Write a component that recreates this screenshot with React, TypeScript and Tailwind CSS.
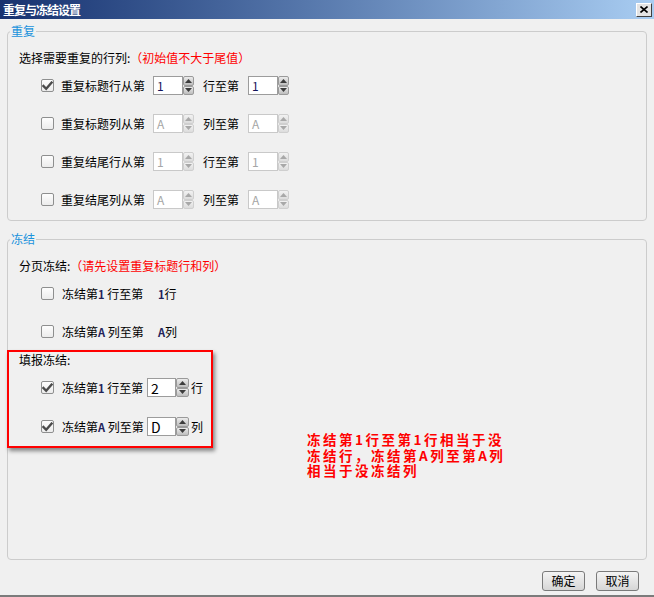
import React from "react";

const font = { fontFamily: '"Noto Sans CJK SC", "Liberation Sans", sans-serif' };

function Check({ checked }: { checked?: boolean }) {
  return (
    <span className="flex h-[13px] w-[13px] shrink-0 items-center justify-center rounded-[2px] border border-[#8e8f8f] bg-gradient-to-b from-[#fdfdfd] to-[#ececec]">
      {checked && (
        <svg width="11" height="10" viewBox="0 0 11 10">
          <path d="M1.5 5 L4.2 7.8 L9.6 1.6" fill="none" stroke="#4b4b4b" strokeWidth="2.4" strokeLinecap="square" />
        </svg>
      )}
    </span>
  );
}

function Arrow({ up, off }: { up?: boolean; off?: boolean }) {
  return (
    <span
      className={
        off
          ? "flex flex-1 items-center justify-center rounded-[2px] border border-[#cfcfcf] bg-gradient-to-b from-[#f2f2f2] to-[#dcdcdc]"
          : "flex flex-1 items-center justify-center rounded-[2px] border border-[#9a9a9a] bg-gradient-to-b from-[#ececec] to-[#bdbdbd]"
      }
    >
      <svg width="7" height="4" viewBox="0 0 7 4">
        <path d={up ? "M0 4 L3.5 0 L7 4 Z" : "M0 0 L3.5 4 L7 0 Z"} fill={off ? "#a8a8a8" : "#3c3c3c"} />
      </svg>
    </span>
  );
}

function Spin({ value, off, big }: { value: string; off?: boolean; big?: boolean }) {
  return (
    <div className="flex h-[19px] shrink-0">
      <div
        className={
          off
            ? "flex w-[30px] items-center border border-[#c9c9c9] bg-white pl-[3px] text-[12px] text-[#a6a6a6]"
            : big
            ? "flex w-[29px] items-center border border-[#9c9c9c] bg-white pl-[3px] text-[14px] text-black"
            : "flex w-[30px] items-center border border-[#9c9c9c] bg-white pl-[3px] text-[12px] text-[#14145a]"
        }
      >
        {value}
      </div>
      <div className={big ? "flex w-[13px] flex-col" : "flex w-[11px] flex-col"}>
        <Arrow up off={off} />
        <Arrow off={off} />
      </div>
    </div>
  );
}

function RepeatRow({ checked, label, mid, val }: { checked?: boolean; label: string; mid: string; val: string }) {
  const off = !checked;
  return (
    <div className="flex h-[19px] items-center pl-[33px]">
      <Check checked={checked} />
      <span className="ml-[7px] w-[84px] whitespace-nowrap">{label}</span>
      <span className="ml-[8px]">
        <Spin value={val} off={off} />
      </span>
      <span className="ml-[9px] w-[36px] whitespace-nowrap">{mid}</span>
      <span className="ml-[9px]">
        <Spin value={val} off={off} />
      </span>
    </div>
  );
}

export default function App() {
  return (
    <div
      style={font}
      className="relative flex h-[597px] w-[654px] flex-col overflow-hidden border-b-2 border-[#7b7b7b] bg-[#f0f0f0] text-[12px] leading-[16px] text-black"
    >
      {/* title bar */}
      <div className="flex h-[19px] shrink-0 items-center justify-between bg-gradient-to-r from-[#17316f] to-[#a9cdf2] pl-[3px] pr-[2px]">
        <span className="text-[12px] font-bold leading-[16px] tracking-[-1px] text-white">重复与冻结设置</span>
        <span className="flex h-[14px] w-[16px] items-center justify-center border border-t-white border-l-white border-r-[#404040] border-b-[#404040] bg-[#e4e4e4] text-[12px] font-bold leading-none text-black">
          <svg width="8" height="7" viewBox="0 0 8 7">
            <path d="M0.5 0.5 L7.5 6.5 M7.5 0.5 L0.5 6.5" stroke="#000" strokeWidth="1.6" />
          </svg>
        </span>
      </div>

      <div className="flex flex-1 flex-col px-[7px]">
        {/* 重复 */}
        <fieldset className="mt-[4px] box-border h-[198px] rounded-[4px] border border-[#cccccc]">
          <legend className="ml-[2px] px-[1px] text-[12px] leading-[16px] text-[#1b93dc]">重复</legend>
          <div className="mt-[9px] flex h-[20px] items-center pl-[11px]">
            <span>选择需要重复的行列:</span>
            <span className="text-[#ff0000]">（初始值不大于尾值）</span>
          </div>
          <div className="mt-[8px] flex flex-col gap-[19px]">
            <RepeatRow checked label="重复标题行从第" mid="行至第" val="1" />
            <RepeatRow label="重复标题列从第" mid="列至第" val="A" />
            <RepeatRow label="重复结尾行从第" mid="行至第" val="1" />
            <RepeatRow label="重复结尾列从第" mid="列至第" val="A" />
          </div>
        </fieldset>

        {/* 冻结 */}
        <fieldset className="mt-[10px] box-border h-[329px] rounded-[4px] border border-[#cccccc]">
          <legend className="ml-[2px] px-[1px] text-[12px] leading-[16px] text-[#1b93dc]">冻结</legend>
          <div className="mt-[9px] flex h-[20px] items-center pl-[11px]">
            <span>分页冻结:</span>
            <span className="text-[#ff0000]">（请先设置重复标题行和列）</span>
          </div>
          <div className="mt-[8px] flex h-[19px] items-center pl-[33px]">
            <Check />
            <span className="ml-[8px] w-[81px] whitespace-nowrap">
              冻结第<span className="text-[11px] font-bold text-[#22225a]">1</span> 行至第
            </span>
            <span className="ml-[15px] whitespace-nowrap">
              <span className="text-[11px] font-bold text-[#22225a]">1</span>行
            </span>
          </div>
          <div className="mt-[19px] flex h-[19px] items-center pl-[33px]">
            <Check />
            <span className="ml-[8px] w-[81px] whitespace-nowrap">
              冻结第<span className="text-[11px] font-bold text-[#22225a]">A</span> 列至第
            </span>
            <span className="ml-[15px] whitespace-nowrap">
              <span className="text-[11px] font-bold text-[#22225a]">A</span>列
            </span>
          </div>

          <div className="mt-[9px] flex items-start">
            {/* 填报冻结 box */}
            <div className="-ml-[1px] box-border h-[98px] w-[206px] shrink-0 border-2 border-[#ff0000] pl-[10px] shadow-[2px_3px_4px_rgba(0,0,0,0.45)]">
              <div className="flex h-[16px] items-center">填报冻结:</div>
              <div className="mt-[10px] flex h-[19px] items-center pl-[22px]">
                <Check checked />
                <span className="ml-[8px] w-[81px] whitespace-nowrap">
                  冻结第<span className="text-[11px] font-bold text-[#22225a]">1</span> 行至第
                </span>
                <span className="ml-[4px]">
                  <Spin value="2" big />
                </span>
                <span className="ml-[2px]">行</span>
              </div>
              <div className="mt-[20px] flex h-[19px] items-center pl-[22px]">
                <Check checked />
                <span className="ml-[8px] w-[81px] whitespace-nowrap">
                  冻结第<span className="text-[11px] font-bold text-[#22225a]">A</span> 列至第
                </span>
                <span className="ml-[4px]">
                  <Spin value="D" big />
                </span>
                <span className="ml-[2px]">列</span>
              </div>
            </div>

            {/* annotation */}
            <div className="ml-[94px] mt-[82px] flex flex-col whitespace-nowrap text-[13.5px] font-bold leading-[15.5px] tracking-[2.5px] text-[#ff0000]">
              <span className="h-[15.5px]">冻结第1行至第1行相当于没</span>
              <span className="h-[15.5px]">冻结行，冻结第A列至第A列</span>
              <span className="h-[15.5px]">相当于没冻结列</span>
            </div>
          </div>
        </fieldset>

        {/* buttons */}
        <div className="mt-[11px] flex justify-end gap-[11px] pr-[8px]">
          <button className="flex h-[20px] w-[43px] items-center justify-center rounded-[3px] border border-[#7a7a7a] bg-gradient-to-b from-[#f4f4f4] to-[#d6d6d6] text-[12px] leading-none text-black">
            确定
          </button>
          <button className="flex h-[20px] w-[43px] items-center justify-center rounded-[3px] border border-[#7a7a7a] bg-gradient-to-b from-[#f4f4f4] to-[#d6d6d6] text-[12px] leading-none text-black">
            取消
          </button>
        </div>
      </div>
    </div>
  );
}
